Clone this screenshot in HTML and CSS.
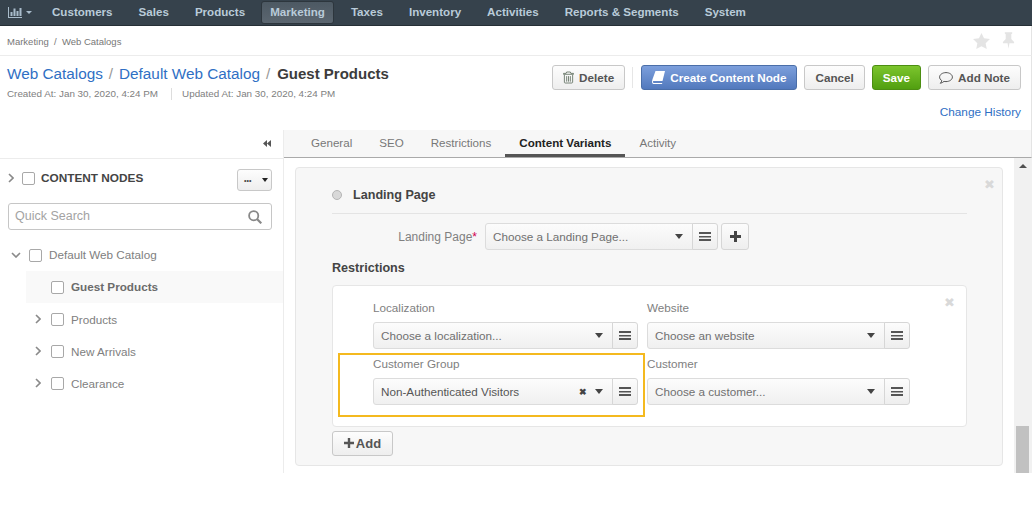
FILE: index.html
```html
<!DOCTYPE html>
<html lang="en">
<head>
  <meta charset="UTF-8" />
  <title>Guest Products - Web Catalogs</title>
  <link rel="stylesheet" href="styles.css">
</head>
<body>
  <nav class="topnav">
    <a class="topnav-logo" href="#">
      <svg width="14" height="11" viewBox="0 0 14 11"><path d="M0 0h1v10h13v1H0z M2.500 5h2v4h-2z M5.500 1.500h2V9h-2z M8.500 4h2v5h-2z M11.500 1h2v8h-2z" fill="#a9bccb"/></svg>
      <i class="caret caret-nav"></i>
    </a>
    <a href="#">Customers</a>
    <a href="#">Sales</a>
    <a href="#">Products</a>
    <a class="active" href="#">Marketing</a>
    <a href="#">Taxes</a>
    <a href="#">Inventory</a>
    <a href="#">Activities</a>
    <a href="#">Reports &amp; Segments</a>
    <a href="#">System</a>
  </nav>

  <div class="crumbs">
    <span>Marketing&nbsp; /&nbsp; Web Catalogs</span>
    <span class="crumb-icons">
      <svg width="17" height="16" viewBox="0 0 18 17"><path d="M9 0l2.700 5.700 6.300.8-4.600 4.300 1.200 6.200L9 14l-5.600 3 1.200-6.200L0 6.500l6.300-.8z" fill="#e4e4e4"/></svg>
      <svg width="13" height="17" viewBox="0 0 14 18"><path d="M3 0h8v1.500l-1 .8v5.200l3 3V12H8l-1 6-1-6H1v-1.500l3-3V2.300l-1-.8z" fill="#e4e4e4"/></svg>
    </span>
  </div>

  <header class="page-head">
    <div class="page-title">
      <h1><a href="#">Web Catalogs</a><em>/</em><a href="#">Default Web Catalog</a><em>/</em><b>Guest Products</b></h1>
      <p class="dates"><span>Created At: Jan 30, 2020, 4:24 PM</span><span>Updated At: Jan 30, 2020, 4:24 PM</span></p>
    </div>
    <div class="page-actions">
      <div class="btn-row">
        <button class="btn">
          <svg width="11" height="13" viewBox="0 0 12 13"><path d="M4 .5h4l.6 1.500H11.500v1H.5v-1h2.900zM1.500 3.500v8.200c0 .5.400.8.800.8h7.400c.4 0 .8-.3.8-.8V3.500M4 5v6M6 5v6M8 5v6" fill="none" stroke="#6b7a6b" stroke-width="1"/></svg>
          Delete
        </button>
        <span class="btn-sep"></span>
        <button class="btn btn-blue">
          <svg width="13" height="13" viewBox="0 0 13 13"><path d="M3.500 0H13l-2.500 10H1.700C.7 10 .5 11.900 1.700 11.900h8.600l-.3 1H1.500C-.2 12.900-.3 10.500.6 8z" fill="#fff"/></svg>
          Create Content Node
        </button>
        <button class="btn">Cancel</button>
        <button class="btn btn-green">Save</button>
        <button class="btn">
          <svg width="14" height="12" viewBox="0 0 14 12"><path d="M7 .6c3.500 0 6.400 2 6.400 4.500S10.500 9.600 7 9.600c-.8 0-1.400-.1-2-.2C4 10.300 2.800 11 1.300 11.300 2.200 10.300 2.700 9.500 2.800 8.600 1.400 7.800.6 6.500.6 5.100.6 2.600 3.500.6 7 .6z" fill="none" stroke="#555" stroke-width="1"/></svg>
          Add Note
        </button>
      </div>
      <a class="history" href="#">Change History</a>
    </div>
  </header>

  <div class="layout">
    <aside class="sidebar">
      <div class="sidebar-top">
        <svg width="8" height="7" viewBox="0 0 8 7"><path d="M4 0v7L0 3.500zM8 0v7L4 3.500z" fill="#555"/></svg>
      </div>
      <div class="tree-head">
        <svg class="chev" width="6" height="10" viewBox="0 0 6 10"><path d="M1 1l4 4-4 4" fill="none" stroke="#8a8a8a" stroke-width="1.600"/></svg>
        <span class="check"></span>
        <strong>CONTENT NODES</strong>
        <button class="tree-menu"><span>•••</span><i class="caret"></i></button>
      </div>
      <div class="search">
        <span>Quick Search</span>
        <svg width="14" height="14" viewBox="0 0 14 14"><circle cx="5.700" cy="5.700" r="4.600" fill="none" stroke="#888" stroke-width="1.800"/><path d="M9 9l4.300 4.300" stroke="#888" stroke-width="2.200"/></svg>
      </div>
      <ul class="tree">
        <li class="tree-root">
          <svg class="chev" width="10" height="6" viewBox="0 0 10 6"><path d="M1 1l4 4 4-4" fill="none" stroke="#8a8a8a" stroke-width="1.600"/></svg>
          <span class="check"></span><span class="tree-label">Default Web Catalog</span>
        </li>
        <li class="tree-item selected"><span class="check"></span><span class="tree-label">Guest Products</span></li>
        <li class="tree-item">
          <svg class="chev" width="6" height="10" viewBox="0 0 6 10"><path d="M1 1l4 4-4 4" fill="none" stroke="#8a8a8a" stroke-width="1.600"/></svg>
          <span class="check"></span>Products
        </li>
        <li class="tree-item">
          <svg class="chev" width="6" height="10" viewBox="0 0 6 10"><path d="M1 1l4 4-4 4" fill="none" stroke="#8a8a8a" stroke-width="1.600"/></svg>
          <span class="check"></span>New Arrivals
        </li>
        <li class="tree-item">
          <svg class="chev" width="6" height="10" viewBox="0 0 6 10"><path d="M1 1l4 4-4 4" fill="none" stroke="#8a8a8a" stroke-width="1.600"/></svg>
          <span class="check"></span>Clearance
        </li>
      </ul>
    </aside>

    <main class="content">
      <div class="tabs">
        <a href="#">General</a>
        <a href="#">SEO</a>
        <a href="#">Restrictions</a>
        <a class="active" href="#">Content Variants</a>
        <a href="#">Activity</a>
      </div>
      <div class="scroll-area">
        <div class="panel-wrap">
          <section class="panel">
            <span class="close close-panel">✖</span>
            <div class="panel-title"><span class="radio"></span>Landing Page</div>
            <div class="landing-row">
              <label>Landing Page<em>*</em></label>
              <div class="select-group">
                <div class="select"><span>Choose a Landing Page...</span><i class="caret"></i></div>
                <button class="select-btn"><span class="bars"></span></button>
                <button class="select-btn plus-btn">
                  <svg width="11" height="11" viewBox="0 0 11 11"><path d="M4 0h3v4h4v3H7v4H4V7H0V4h4z" fill="#444"/></svg>
                </button>
              </div>
            </div>
            <h3>Restrictions</h3>
            <div class="restrictions">
              <span class="close close-box">✖</span>
              <div class="restrictions-grid">
                <div class="field">
                  <label>Localization</label>
                  <div class="select-group">
                    <div class="select"><span>Choose a localization...</span><i class="caret"></i></div>
                    <button class="select-btn"><span class="bars"></span></button>
                  </div>
                </div>
                <div class="field">
                  <label>Website</label>
                  <div class="select-group">
                    <div class="select"><span>Choose an website</span><i class="caret"></i></div>
                    <button class="select-btn"><span class="bars"></span></button>
                  </div>
                </div>
                <div class="field">
                  <label>Customer Group</label>
                  <div class="select-group">
                    <div class="select"><span class="value">Non-Authenticated Visitors</span><b class="clear">✖</b><i class="caret"></i></div>
                    <button class="select-btn"><span class="bars"></span></button>
                  </div>
                </div>
                <div class="field">
                  <label>Customer</label>
                  <div class="select-group">
                    <div class="select"><span>Choose a customer...</span><i class="caret"></i></div>
                    <button class="select-btn"><span class="bars"></span></button>
                  </div>
                </div>
              </div>
              <div class="highlight"></div>
            </div>
            <button class="btn btn-add">
              <svg width="10" height="10" viewBox="0 0 10 10"><path d="M3.800 0h2.400v3.800H10v2.400H6.200V10H3.800V6.200H0V3.800h3.800z" fill="#555"/></svg>Add
            </button>
          </section>
        </div>
        <div class="scrollbar"><i class="arrow-up"></i><span class="thumb"></span></div>
      </div>
    </main>
  </div>
</body>
</html>
```

FILE: styles.css
```css
* {
  box-sizing: border-box;
}
html, body {
  height: 100%;
}
body {
  margin: 0;
  background: #fff;
  color: #4d4d4d;
  font-family: "Liberation Sans", Arial, sans-serif;
  font-size: 12px;
  overflow: hidden;
}
a {
  text-decoration: none;
}
button {
  font-family: inherit;
}
.caret {
  display: inline-block;
  flex: none;
  width: 0;
  height: 0;
  border-left: 4px solid transparent;
  border-right: 4px solid transparent;
  border-top: 5px solid #444;
}

/* top navigation */
.topnav {
  display: flex;
  align-items: center;
  height: 26px;
  padding-left: 8px;
  background: #36424c;
  border-bottom: 1px solid #262f36;
}
.topnav a {
  height: 23px;
  padding: 0 13px;
  color: #b9cbd9;
  font-size: 11.600px;
  font-weight: bold;
  line-height: 22px;
}
.topnav a.active {
  margin: 0 4px 0 3px;
  padding: 0 8px;
  background: linear-gradient(#4d5963, #5b6670);
  border: 1px solid #2d363d;
  border-radius: 3px;
  line-height: 20px;
}
.topnav .topnav-logo {
  display: flex;
  align-items: center;
  gap: 4px;
  width: 31px;
  padding: 0;
}
.caret-nav {
  border-left-width: 3.500px;
  border-right-width: 3.500px;
  border-top: 3.500px solid #a9bccb;
}

/* breadcrumbs and title */
.crumbs {
  display: flex;
  justify-content: space-between;
  align-items: center;
  height: 30px;
  padding: 2px 16px 0 7px;
  border-bottom: 1px solid #ececec;
  border-right: 1px solid #e4e4e4;
  color: #777;
  font-size: 9.500px;
}
.crumb-icons {
  display: flex;
  gap: 12px;
  align-items: center;
  margin-top: -2px;
}
.page-head {
  display: flex;
  justify-content: space-between;
  height: 74px;
  padding: 8px 10px 0 7px;
  border-right: 1px solid #e4e4e4;
}
.page-title h1 {
  margin: 0;
  font-size: 15.300px;
  font-weight: normal;
  line-height: 20px;
}
.page-title a {
  color: #2f6fc4;
}
.page-title em {
  margin: 0 6px;
  color: #999;
  font-style: normal;
}
.page-title b {
  margin-left: 1px;
  color: #3c3c3c;
  font-size: 15px;
}
.dates {
  display: flex;
  margin: 4px 0 0;
  color: #808080;
  font-size: 9.850px;
  line-height: 12px;
}
.dates span + span {
  margin-left: 13px;
  padding-left: 10px;
  border-left: 1px solid #ddd;
}
.page-actions {
  display: flex;
  flex-direction: column;
  align-items: flex-end;
}
.btn-row {
  display: flex;
  align-items: center;
  gap: 7px;
  margin-top: 1px;
}
.btn {
  display: inline-flex;
  align-items: center;
  justify-content: center;
  gap: 5px;
  height: 25px;
  padding: 0 10px;
  background: linear-gradient(#fdfdfd, #eeeeee);
  border: 1px solid #c8c8c8;
  border-radius: 3px;
  color: #555;
  font-size: 11.700px;
  font-weight: bold;
}
.btn-sep {
  width: 1px;
  height: 21px;
  margin-right: 1px;
  background: #e6e6e6;
}
.btn-blue {
  background: linear-gradient(#7c9fdc, #5279bd);
  border-color: #4a6ea8;
  color: #fff;
}
.btn-green {
  background: linear-gradient(#7cc52d, #519f10);
  border-color: #4c8e12;
  color: #fff;
}
.history {
  margin-top: 15px;
  color: #2f6fc4;
  font-size: 11.800px;
}

/* main layout */
.layout {
  display: flex;
  height: 343px;
}
.sidebar {
  width: 284px;
  flex: none;
  border-right: 1px solid #ececec;
}
.sidebar-top {
  display: flex;
  align-items: center;
  justify-content: flex-end;
  height: 29px;
  padding: 0 12px 2px 0;
  border-bottom: 1px solid #ececec;
}
.tree-head {
  display: flex;
  align-items: center;
  height: 44px;
  padding: 0 11px 4px 8px;
}
.tree-head strong {
  margin-top: -2px;
  color: #444;
  font-size: 11.800px;
}
.tree-menu {
  display: flex;
  align-items: center;
  justify-content: space-between;
  width: 35px;
  height: 22px;
  margin: 2px 0 0 auto;
  padding: 0 3px 0 6px;
  background: linear-gradient(#fdfdfd, #eeeeee);
  border: 1px solid #c8c8c8;
  border-radius: 3px;
  font-size: 7px;
  color: #444;
}
.tree-menu .caret {
  border-left-width: 3.500px;
  border-right-width: 3.500px;
  border-top-width: 4px;
  border-top-color: #222;
}
.check {
  display: inline-block;
  flex: none;
  width: 13px;
  height: 13px;
  background: #fff;
  border: 1px solid #a8a8a8;
  border-radius: 2px;
}
.tree-head .chev {
  margin: -2px 8px 0 0;
}
.tree-head .check {
  margin: -2px 6px 0 0;
}
.search {
  display: flex;
  align-items: center;
  justify-content: space-between;
  height: 27px;
  margin: 0 11px 0 8px;
  padding: 0 9px 0 6px;
  border: 1px solid #c6c6c6;
  border-radius: 3px;
  color: #a3a3a3;
  font-size: 12.500px;
}
.search span {
  margin-top: -2px;
}
.tree {
  margin: 9px 0 0;
  padding: 0;
  list-style: none;
  color: #808080;
  font-size: 11.700px;
}
.tree li {
  display: flex;
  align-items: center;
  height: 32px;
}
.tree-label {
  margin-top: -2px;
}
.tree-root {
  padding-left: 11px;
}
.tree-root .chev {
  margin-right: 8px;
}
.tree-root .check {
  margin-right: 7px;
}
.tree-item {
  margin-left: 26px;
  padding-left: 9px;
}
.tree-item .chev {
  margin-right: 10px;
}
.tree-item .check {
  margin-right: 7px;
}
.tree-item.selected {
  padding-left: 25px;
  background: #f9f9f9;
  color: #6b6b6b;
  font-weight: bold;
}

/* tabs and form */
.content {
  flex: 1;
  min-width: 0;
}
.tabs {
  display: flex;
  height: 28px;
  padding-left: 15px;
  background: #f7f7f7;
  border-bottom: 1px solid #aaa;
  border-right: 1px solid #e4e4e4;
}
.tabs a {
  height: 27px;
  margin-right: 3px;
  padding: 0 12px;
  color: #777;
  font-size: 11.600px;
  line-height: 26px;
}
.tabs a.active {
  margin: 0 2px 0 -1px;
  padding: 0 14px;
  border-bottom: 3px solid #555;
  color: #222;
  font-weight: bold;
}
.scroll-area {
  display: flex;
  height: 315px;
}
.panel-wrap {
  flex: 1;
  min-width: 0;
  padding: 9px 11px 0;
}
.panel {
  position: relative;
  height: 299px;
  padding: 18px 35px 0 36px;
  background: #f7f7f7;
  border: 1px solid #e6e6e6;
  border-radius: 4px;
}
.panel-title {
  display: flex;
  align-items: center;
  height: 28px;
  padding-bottom: 10px;
  border-bottom: 1px solid #e4e4e4;
  color: #444;
  font-size: 12.600px;
  font-weight: bold;
  line-height: 18px;
}
.radio {
  width: 10px;
  height: 10px;
  margin-right: 11px;
  background: #d8d8d8;
  border: 1px solid #b5b5b5;
  border-radius: 50%;
}
.landing-row {
  display: flex;
  align-items: center;
  margin-top: 9px;
}
.landing-row label {
  width: 145px;
  margin-right: 8px;
  color: #808080;
  font-size: 12px;
  text-align: right;
}
.landing-row em {
  color: #d1004e;
  font-style: normal;
}
.landing-row .select {
  width: 208px;
}
.select-group {
  display: flex;
}
.select {
  display: flex;
  align-items: center;
  flex: 1;
  height: 27px;
  padding: 0 9px 0 7px;
  background: linear-gradient(#fcfcfc, #f0f0f0);
  border: 1px solid #dcdcdc;
  border-radius: 3px 0 0 3px;
  color: #707070;
  font-size: 11.700px;
}
.select span {
  flex: 1;
}
.select .value {
  color: #555;
}
.select .clear {
  margin-right: 8px;
  color: #444;
  font-size: 9px;
}
.select-btn {
  display: flex;
  align-items: center;
  justify-content: center;
  width: 26px;
  height: 27px;
  margin-left: -1px;
  padding: 0;
  background: linear-gradient(#fcfcfc, #eeeeee);
  border: 1px solid #d6d6d6;
  border-radius: 0 3px 3px 0;
}
.plus-btn {
  width: 28px;
  margin-left: 3px;
  border-radius: 3px;
}
.bars {
  width: 12px;
  height: 9px;
  border-top: 2px solid #555;
  border-bottom: 2px solid #555;
  background: linear-gradient(#555, #555) center / 100% 1.500px no-repeat;
}
.panel h3 {
  margin: 10px 0 9px;
  color: #444;
  font-size: 12.600px;
  line-height: 16px;
}
.restrictions {
  position: relative;
  height: 142px;
  padding: 14px 0 0 40px;
  background: #fff;
  border: 1px solid #e6e6e6;
  border-radius: 4px;
}
.restrictions-grid {
  display: grid;
  grid-template-columns: 265px 263px;
  row-gap: 7px;
  column-gap: 9px;
}
.field label {
  display: block;
  margin-bottom: 7px;
  color: #808080;
  font-size: 11.700px;
  line-height: 15px;
}
.highlight {
  position: absolute;
  left: 5px;
  top: 67px;
  width: 307px;
  height: 64px;
  border: 2px solid #f4b91f;
}
.close {
  position: absolute;
  color: #d9d9d9;
  font-size: 13px;
  line-height: 13px;
}
.close-panel {
  top: 10px;
  right: 7px;
}
.close-box {
  top: 10px;
  right: 11px;
}
.btn-add {
  gap: 2px;
  width: 61px;
  height: 25px;
  margin-top: 4px;
  padding: 0 0 1px;
  font-size: 13px;
}
.scrollbar {
  position: relative;
  display: flex;
  align-items: flex-end;
  width: 18px;
  height: 100%;
  padding: 0 2px;
  background: #f1f1f1;
}
.arrow-up {
  position: absolute;
  left: 5px;
  top: 6px;
  border-left: 4px solid transparent;
  border-right: 4px solid transparent;
  border-bottom: 4px solid #505050;
}
.thumb {
  width: 13px;
  height: 47px;
  background: #c1c1c1;
}
```
